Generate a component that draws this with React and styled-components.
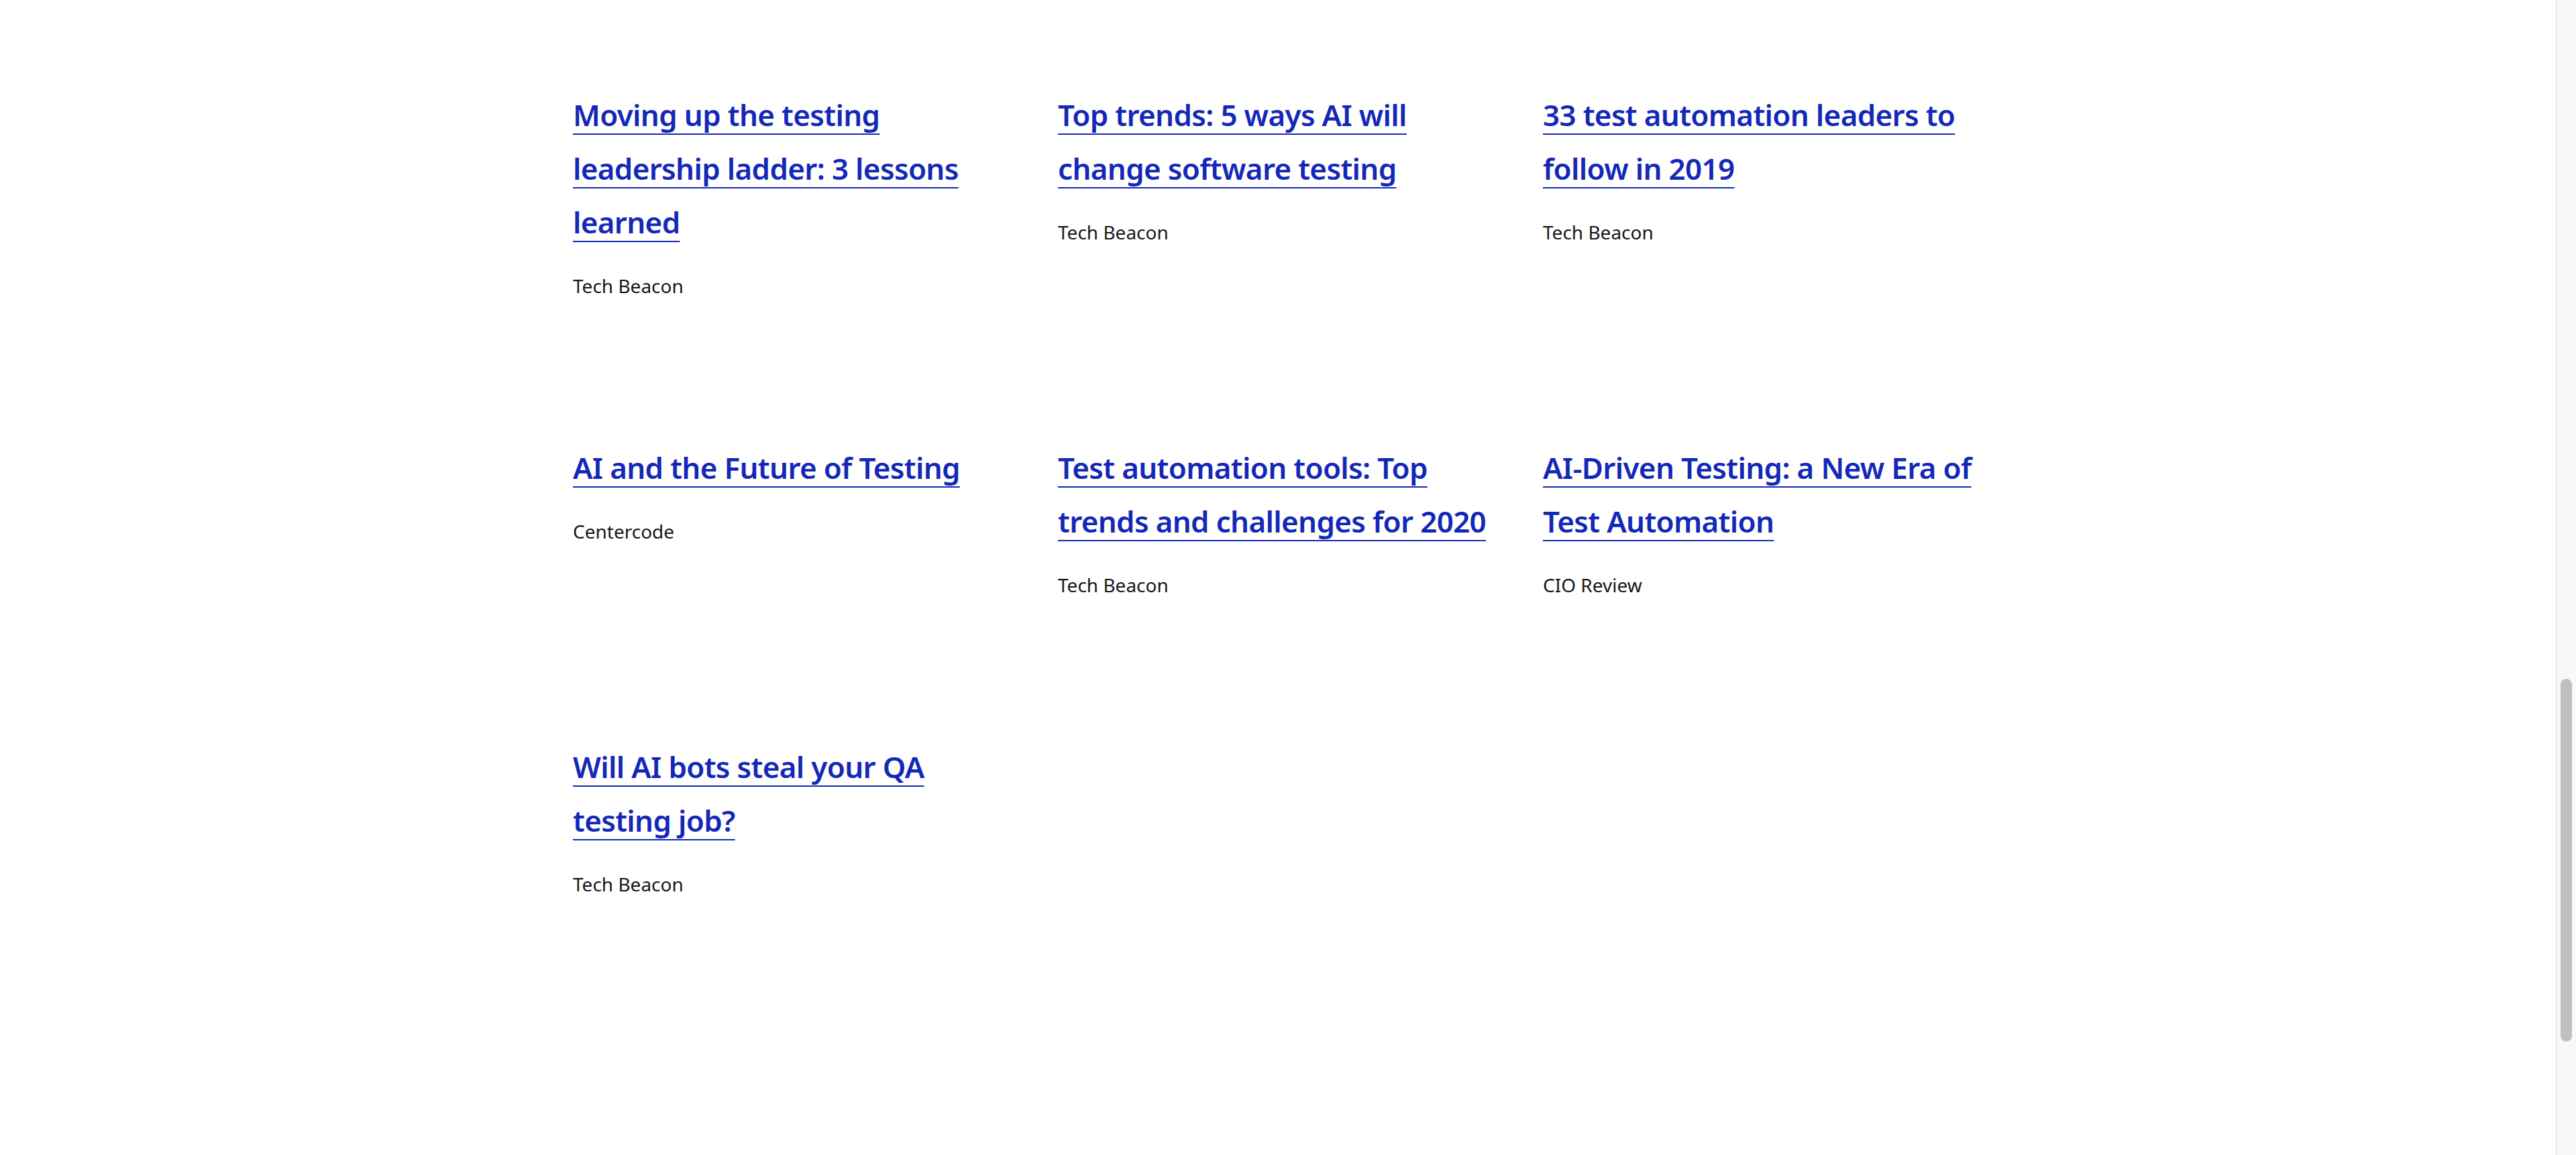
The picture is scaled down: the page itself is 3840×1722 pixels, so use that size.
import styled, { createGlobalStyle } from "styled-components";

const GlobalStyle = createGlobalStyle`
  html, body {
    margin: 0;
    padding: 0;
    background: #fff;
  }
  body {
    font-family: "Noto Sans", Roboto, sans-serif;
    color: #161616;
  }
`;

// ------styled components start ------//
const Page = styled.div`
  display: flex;
  height: 100vh;
  overflow: hidden;
`;

const Main = styled.main`
  flex: 1;
  padding: 131px 0 0 854px;
`;

const Grid = styled.div`
  display: grid;
  grid-template-columns: repeat(3, 650px);
  column-gap: 73px;
  row-gap: 210px;
  align-items: start;
`;

const Card = styled.article`
  display: flex;
  flex-direction: column;
`;

const TitleLink = styled.a`
  font-family: "Noto Sans", Roboto, sans-serif;
  font-weight: 600;
  font-size: 44px;
  letter-spacing: -0.7px;
  line-height: 80px;
  color: #1428b8;
  white-space: nowrap;
  text-decoration: underline;
  text-decoration-thickness: 2px;
  text-underline-offset: 11px;
  cursor: pointer;
`;

const Source = styled.p`
  margin: 34px 0 0;
  font-family: "Noto Sans", Roboto, sans-serif;
  font-weight: 400;
  font-size: 28px;
  line-height: 42px;
  color: #161616;
`;

const ScrollTrack = styled.aside`
  width: 28px;
  flex-shrink: 0;
  background: #f8f8f8;
  border-left: 2px solid #e6e6e6;
  padding-top: 1012px;
`;

const ScrollThumb = styled.div`
  width: 17px;
  height: 541px;
  margin-left: 5px;
  border-radius: 9px;
  background: #bfbfbf;
`;
// ------styled components end ------//

const articles = [
  { lines: ["Moving up the testing", "leadership ladder: 3 lessons", "learned"], source: "Tech Beacon" },
  { lines: ["Top trends: 5 ways AI will", "change software testing"], source: "Tech Beacon" },
  { lines: ["33 test automation leaders to", "follow in 2019"], source: "Tech Beacon" },
  { lines: ["AI and the Future of Testing"], source: "Centercode" },
  { lines: ["Test automation tools: Top", "trends and challenges for 2020"], source: "Tech Beacon" },
  { lines: ["AI-Driven Testing: a New Era of", "Test Automation"], source: "CIO Review" },
  { lines: ["Will AI bots steal your QA", "testing job?"], source: "Tech Beacon" },
];

const App = () => {
  return (
    <>
      <GlobalStyle />
      <Page>
        <Main>
          <Grid>
            {articles.map((item, i) => (
              <Card key={i}>
                <div>
                  <TitleLink href="#">
                    {item.lines.map((line, j) => (
                      <span key={j}>
                        {line}
                        {j < item.lines.length - 1 && <br />}
                      </span>
                    ))}
                  </TitleLink>
                </div>
                <Source>{item.source}</Source>
              </Card>
            ))}
          </Grid>
        </Main>
        <ScrollTrack>
          <ScrollThumb />
        </ScrollTrack>
      </Page>
    </>
  );
};

export default App;
